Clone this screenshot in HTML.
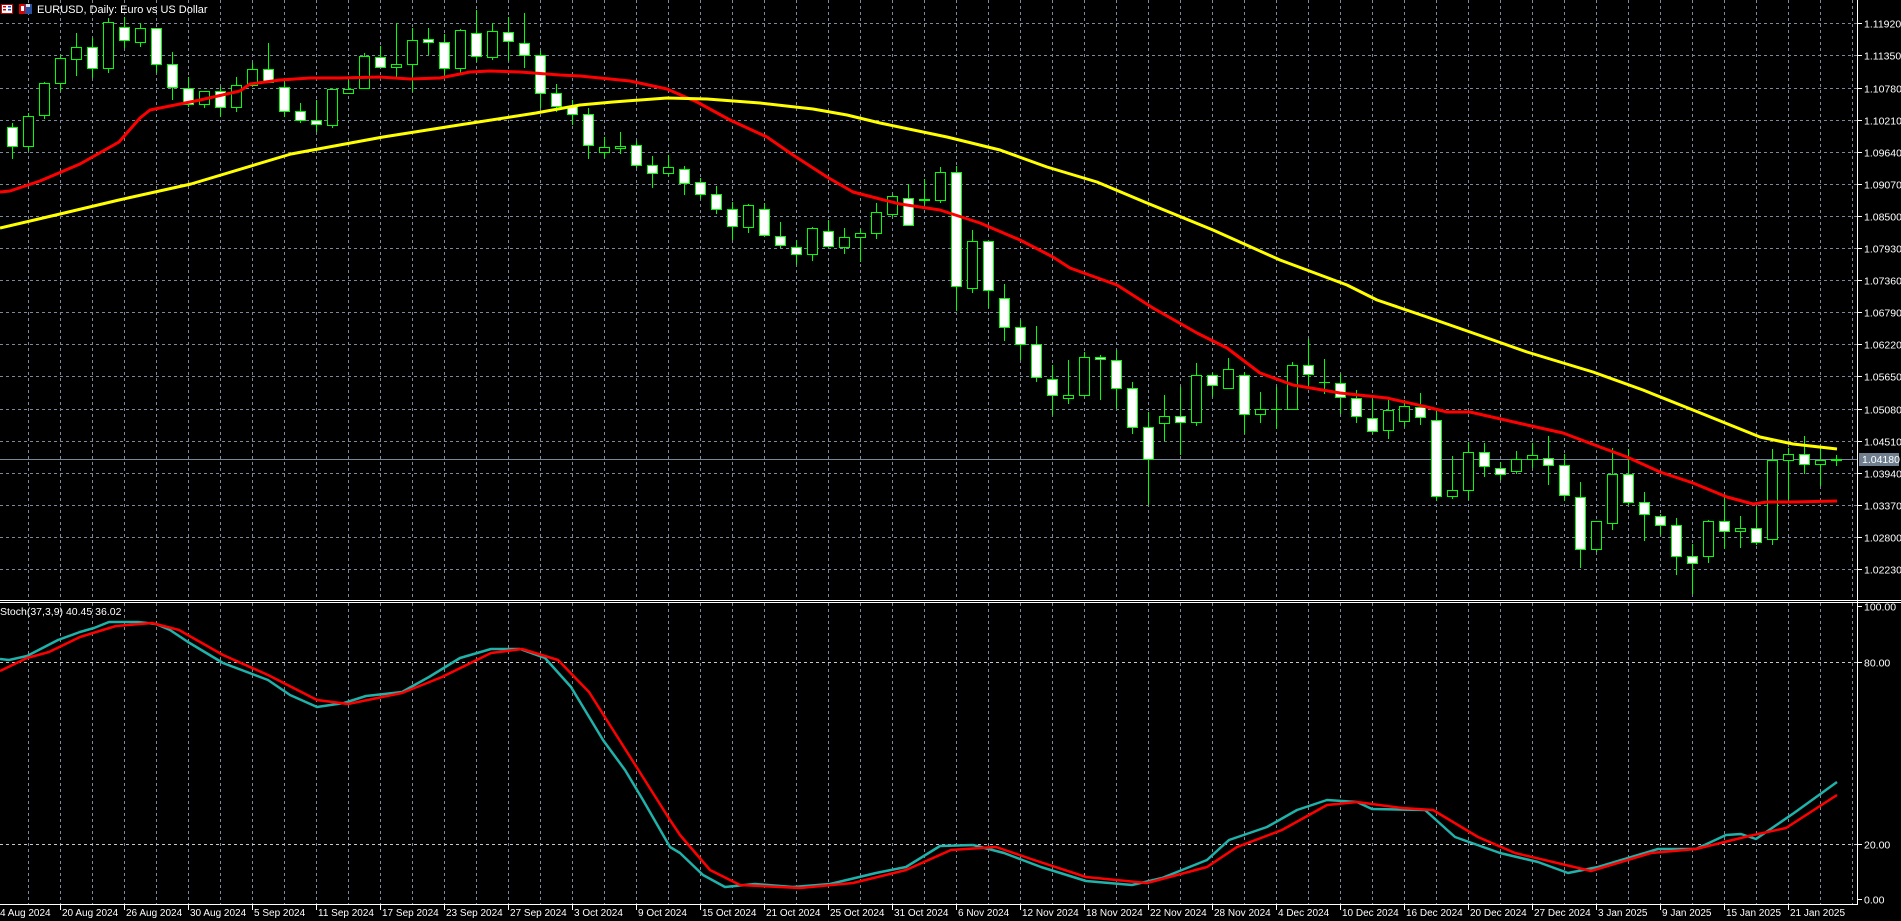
<!DOCTYPE html>
<html><head><meta charset="utf-8"><style>
html,body{margin:0;padding:0;background:#000;width:1901px;height:921px;overflow:hidden}
svg{display:block}
text{font-family:"Liberation Sans",sans-serif;fill:#fff}
</style></head><body>
<svg id="c" width="1901" height="921" xmlns="http://www.w3.org/2000/svg"></svg>
<script>
var NS="http://www.w3.org/2000/svg",s=document.getElementById('c'),h='';
h+='<rect width="1901" height="921" fill="#000"/>';
// grid horizontal main
for(var k=0;k<18;k++){var y=Math.round(23.3+32.1*k)+0.5;h+='<line x1="0" y1="'+y+'" x2="1857" y2="'+y+'" stroke="#7d889c" stroke-dasharray="3,3"/>';}
// vertical grid
for(var k=0;k<=57;k++){var x=28+32*k+0.5;h+='<line x1="'+x+'" y1="0" x2="'+x+'" y2="600" stroke="#7d889c" stroke-dasharray="3,3"/><line x1="'+x+'" y1="603" x2="'+x+'" y2="904" stroke="#7d889c" stroke-dasharray="3,3"/>';}
// stoch levels
[662.5,844.5].forEach(function(y){h+='<line x1="0" y1="'+y+'" x2="1857" y2="'+y+'" stroke="#c8c8c8" stroke-dasharray="3,3"/>';});
// price line
h+='<line x1="0" y1="459.5" x2="1857" y2="459.5" stroke="#778899"/>';
// candles [top,bottom,high,low,bear]
var C=[[127,146,123,159,1],[116,146,113,151,0],[83,115,82,119,0],[58,83,55,91,0],[47,59,33,76,0],[47,68,38,78,1],[22,68,18,73,0],[27,40,17,48,1],[28,42,23,47,0],[28,64,28,73,1],[64,87,52,100,1],[88,104,77,107,1],[91,104,91,108,0],[91,107,87,117,1],[85,107,77,112,0],[69,85,63,87,0],[69,82,43,83,1],[87,111,81,117,1],[111,120,103,123,1],[120,124,100,132,1],[89,125,89,128,0],[89,93,79,93,0],[56,88,53,89,0],[57,67,46,67,1],[64,67,23,77,0],[40,64,28,92,0],[39,42,28,55,1],[42,68,34,78,1],[30,68,29,73,0],[33,56,10,62,1],[31,57,23,60,0],[32,41,17,61,1],[43,55,13,68,1],[55,93,51,108,1],[93,106,84,112,1],[106,114,100,125,1],[114,145,108,159,1],
[147,152,137,158,0],[146,148,132,154,0],[145,165,141,168,1],[165,173,156,188,1],[167,173,155,176,0],[169,183,166,195,1],[182,194,178,199,1],[194,209,186,214,1],[209,226,202,240,1],[205,227,204,233,0],[209,235,203,237,1],[236,245,222,248,1],[247,254,240,265,1],[228,254,227,261,0],[231,246,220,247,1],[237,247,228,254,0],[233,237,229,262,0],[212,233,203,239,0],[196,214,194,217,0],
[198,225,184,226,1],[199,200,179,205,0],[172,200,167,203,0],[172,286,166,311,1],[241,288,230,293,0],[241,290,241,308,1],[298,327,284,341,1],[327,344,320,360,1],[344,377,326,382,1],[379,395,365,415,1],[395,398,360,404,0],[357,395,352,397,0],[357,359,355,400,1],[360,388,350,409,1],[388,427,382,434,1],[427,459,412,505,1],[416,423,395,441,0],[416,422,387,455,1],[375,422,363,426,0],[375,385,373,397,1],[369,388,358,389,0],[375,414,372,434,1],[409,414,392,423,0],[409,409,387,429,0],[365,409,362,410,0],[365,374,339,388,1],[382,382,359,394,0],[383,397,374,414,1],[398,416,390,423,1],[418,431,399,434,1],
[410,430,400,439,0],[406,421,400,427,0],[407,417,393,425,1],[420,496,410,501,1],[490,496,456,499,0],[452,490,442,500,0],[452,466,443,477,1],[468,474,462,480,1],[459,471,451,474,0],[455,459,443,468,0],[458,465,436,485,1],[465,495,454,501,1],[497,549,482,568,1],[521,549,521,552,0],[474,523,448,530,0],[474,502,449,505,1],[502,514,492,541,1],[516,525,514,535,1],[525,556,518,575,1],[556,563,544,594,1],[521,556,520,563,0],[521,531,495,549,1],[528,531,516,548,0],[528,542,507,545,1],[460,539,449,545,0],[454,460,448,501,0],[454,464,436,474,1],[460,464,448,486,0],[459,460,455,466,0]];
C.forEach(function(c,j){var x=12+16*j,wx=x+0.5;
h+='<line x1="'+wx+'" y1="'+c[2]+'" x2="'+wx+'" y2="'+c[3]+'" stroke="#00ff00"/>';
if(c[1]-c[0]<1){h+='<line x1="'+(x-5)+'" y1="'+(c[0]+0.5)+'" x2="'+(x+6)+'" y2="'+(c[0]+0.5)+'" stroke="#00ff00"/>';}
else h+='<rect x="'+(x-4.5)+'" y="'+(c[0]+0.5)+'" width="10" height="'+(c[1]-c[0])+'" fill="'+(c[4]?'#fff':'#000')+'" stroke="#00ff00"/>';});
function pl(p,col,w){h+='<polyline fill="none" stroke="'+col+'" stroke-width="'+w+'" stroke-linejoin="round" points="'+p.map(function(a){return a.join(',')}).join(' ')+'"/>';}
pl([[0,192],[10,191],[40,181],[80,164],[119,142],[140,118],[150,110],[170,106],[200,100],[240,91],[250,84],[280,80],[310,78],[340,78],[380,77],[410,79],[440,78],[470,72],[490,71],[520,72],[560,75],[580,76],[630,81],[667,89],[697,102],[730,120],[767,137],[793,155],[827,177],[853,192],[880,199],[900,204],[940,210],[980,223],[1020,240],[1053,257],[1070,268],[1117,285],[1153,308],[1197,333],[1227,348],[1260,373],[1293,385],[1340,393],[1387,398],[1427,407],[1447,412],[1470,412],[1527,425],[1563,433],[1600,447],[1627,457],[1660,472],[1693,483],[1727,497],[1753,504],[1767,502],[1793,502],[1837,501]],'#ff0000',3);
pl([[0,228],[60,214],[119,200],[191,184],[291,154],[383,137],[459,125],[536,113],[580,105],[613,102],[667,98],[707,99],[760,103],[813,109],[847,115],[880,123],[947,137],[1000,150],[1047,167],[1097,182],[1147,203],[1213,230],[1280,260],[1347,285],[1377,300],[1427,317],[1493,340],[1527,352],[1593,372],[1643,390],[1693,410],[1760,437],[1793,444],[1837,449]],'#ffff00',3);
// stoch
pl([[0,659],[9,660],[27,656],[58,640],[80,632],[94,628],[109,622],[138,622],[156,624],[170,630],[188,642],[223,663],[268,680],[290,695],[317,707],[344,703],[366,696],[402,692],[429,677],[460,658],[491,649],[520,649],[545,658],[571,687],[603,740],[625,770],[643,800],[670,847],[680,853],[703,875],[725,887],[755,884],[793,887],[830,884],[876,873],[906,867],[940,846],[973,845],[1004,853],[1041,867],[1086,881],[1132,885],[1162,878],[1207,860],[1229,840],[1267,827],[1297,810],[1327,800],[1357,802],[1372,809],[1425,810],[1455,837],[1500,853],[1538,862],[1568,873],[1598,867],[1658,849],[1696,849],[1726,835],[1741,834],[1756,839],[1794,813],[1837,782]],'#20b2aa',2.5);
pl([[0,671],[27,658],[49,652],[80,637],[116,626],[152,623],[179,630],[223,655],[268,675],[317,700],[348,704],[402,693],[442,677],[491,653],[522,649],[558,660],[589,692],[634,763],[670,820],[680,835],[710,870],[740,885],[800,888],[853,883],[906,870],[951,850],[996,847],[1034,860],[1086,877],[1147,883],[1207,867],[1237,847],[1282,830],[1327,805],[1357,802],[1402,808],[1433,810],[1478,837],[1515,853],[1591,871],[1651,853],[1696,849],[1749,836],[1786,828],[1837,795]],'#ff0000',2.5);
// frame
h+='<line x1="0" y1="600.5" x2="1901" y2="600.5" stroke="#fff"/><line x1="0" y1="602.5" x2="1901" y2="602.5" stroke="#fff"/>';
h+='<line x1="1857.5" y1="0" x2="1857.5" y2="905" stroke="#fff"/><line x1="0" y1="904.5" x2="1858" y2="904.5" stroke="#fff"/>';
var P=['1.11920','1.11350','1.10780','1.10210','1.09640','1.09070','1.08500','1.07930','1.07360','1.06790','1.06220','1.05650','1.05080','1.04510','1.03940','1.03370','1.02800','1.02230'];
P.forEach(function(t,k){var y=Math.round(23.3+32.1*k)+0.5;h+='<line x1="1857" y1="'+y+'" x2="1862" y2="'+y+'" stroke="#fff"/><text x="1864" y="'+(y+4)+'" font-size="10.5">'+t+'</text>';});
h+='<rect x="1859" y="453" width="40" height="13" fill="#6f7f8f"/><text x="1862" y="463" font-size="10.5">1.04180</text>';
[['100.00',606.5],['80.00',662.5],['20.00',844.5],['0.00',899.5]].forEach(function(a){h+='<line x1="1857" y1="'+a[1]+'" x2="1862" y2="'+a[1]+'" stroke="#fff"/><text x="1864" y="'+(a[1]+4)+'" font-size="10.5">'+a[0]+'</text>';});
var D=['20 Aug 2024','26 Aug 2024','30 Aug 2024','5 Sep 2024','11 Sep 2024','17 Sep 2024','23 Sep 2024','27 Sep 2024','3 Oct 2024','9 Oct 2024','15 Oct 2024','21 Oct 2024','25 Oct 2024','31 Oct 2024','6 Nov 2024','12 Nov 2024','18 Nov 2024','22 Nov 2024','28 Nov 2024','4 Dec 2024','10 Dec 2024','16 Dec 2024','20 Dec 2024','27 Dec 2024','3 Jan 2025','9 Jan 2025','15 Jan 2025','21 Jan 2025'];
h+='<text x="0" y="916" font-size="10">4 Aug 2024</text>';
D.forEach(function(t,k){var x=60+64*k+0.5;h+='<line x1="'+x+'" y1="904" x2="'+x+'" y2="910" stroke="#fff"/><text x="'+(x+1.5)+'" y="916" font-size="10">'+t+'</text>';});
h+='<text x="0" y="615" font-size="10.5">Stoch(37,3,9) 40.45 36.02</text>';
// title icons
h+='<rect x="1.5" y="4.5" width="11" height="9" fill="#fff" stroke="#c00"/><rect x="3" y="6" width="3" height="1.5" fill="#c00"/><rect x="3" y="9" width="3" height="1.5" fill="#c00"/><rect x="8" y="6" width="3" height="1.5" fill="#2050c0"/><rect x="8" y="9" width="3" height="1.5" fill="#2050c0"/>';
h+='<rect x="19" y="4" width="6" height="10" fill="#d00"/><rect x="25" y="4" width="7" height="10" fill="#2a4fa0"/><rect x="21" y="6" width="3" height="5" fill="#fff"/><rect x="26" y="4" width="4" height="3" fill="#ddd"/>';
h+='<text x="37" y="13" font-size="11">EURUSD, Daily:  Euro vs US Dollar</text>';
s.innerHTML=h;
</script>
</body></html>
